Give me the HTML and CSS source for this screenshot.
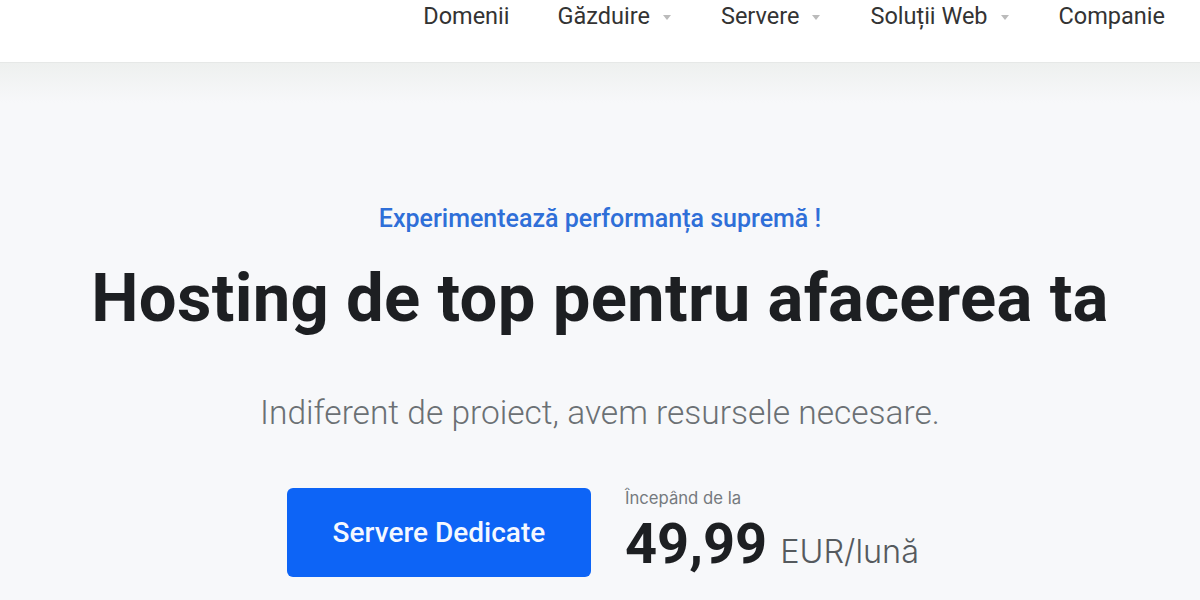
FILE: index.html
```html
<!DOCTYPE html>
<html lang="ro">
<head>
    <meta charset="UTF-8">
    <meta name="viewport" content="width=device-width, initial-scale=1.0">
    <title>Hosting de top pentru afacerea ta</title>
    <link rel="stylesheet" href="styles.css">
</head>
<body>
    <header class="site-header">
        <nav class="main-nav">
            <a href="#">Domenii</a>
            <a href="#" class="has-menu">Găzduire</a>
            <a href="#" class="has-menu">Servere</a>
            <a href="#" class="has-menu">Soluții Web</a>
            <a href="#">Companie</a>
        </nav>
    </header>

    <main class="hero">
        <p class="tagline">Experimentează performanța supremă !</p>
        <h1>Hosting de top pentru afacerea ta</h1>
        <p class="lead">Indiferent de proiect, avem resursele necesare.</p>

        <div class="offer">
            <a href="#" class="btn-primary">Servere Dedicate</a>
            <div class="price">
                <span class="price-label">Începând de la</span>
                <div class="price-value">
                    <strong>49,99</strong>
                    <span>EUR/lună</span>
                </div>
            </div>
        </div>
    </main>
</body>
</html>
```

FILE: styles.css
```css
body {
    margin: 0;
    font-family: Roboto, "Noto Sans", sans-serif;
    background-color: #f7f8fa;
    color: #1d1f22;
}
.site-header {
    height: 62px;
    background-color: white;
    border-bottom: 1px solid #e6e8e7;
}
.main-nav {
    display: flex;
    justify-content: flex-end;
    gap: 48px;
    padding: 1px 35px 0 0;
}
.main-nav a {
    font-size: 23.5px;
    color: #333;
    text-decoration: none;
    line-height: 30px;
}
.main-nav a.has-menu::after {
    content: "";
    display: inline-block;
    margin: 0 2px 0 13px;
    vertical-align: middle;
    border-left: 4px solid transparent;
    border-right: 4px solid transparent;
    border-top: 5px solid #bbb;
}
.hero {
    background: linear-gradient(#eef0ef, #f7f8fa 40px);
    height: 537px;
    text-align: center;
    padding-top: 1px;
}
.tagline {
    margin: 140px 0 0;
    color: #2f6fd8;
    font-size: 25px;
    font-weight: 500;
}
h1 {
    margin: 25px 0 0;
    font-size: 67px;
    font-weight: 700;
    line-height: 80px;
    letter-spacing: 0.3px;
}
.lead {
    margin: 55px 0 0;
    font-size: 33.5px;
    font-weight: 300;
    color: #6b7074;
}
.offer {
    display: flex;
    justify-content: center;
    gap: 34px;
    margin-top: 56px;
    padding-left: 6px;
}
.btn-primary {
    width: 304px;
    height: 89px;
    display: flex;
    align-items: center;
    justify-content: center;
    background-color: #0d64f6;
    color: #f4f8ff;
    border-radius: 6px;
    font-size: 28px;
    font-weight: 500;
    text-decoration: none;
}
.price {
    text-align: left;
    display: flex;
    flex-direction: column;
    margin-top: 0;
}
.price-label {
    font-family: Inter, sans-serif;
    font-size: 16.7px;
    color: #757a7e;
}
.price-value {
    display: flex;
    align-items: baseline;
    gap: 13px;
    margin-top: 3px;
}
.price-value strong {
    font-size: 56px;
    font-weight: 700;
    color: #1d1f22;
}
.price-value span {
    font-family: Inter, sans-serif;
    font-size: 32.5px;
    font-weight: 300;
    color: #555a5e;
}
```
